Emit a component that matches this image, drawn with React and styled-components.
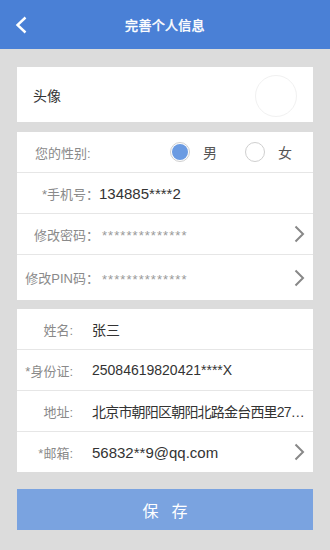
import React from "react";
import styled, { createGlobalStyle } from "styled-components";

const Global = createGlobalStyle`
  html, body { margin: 0; padding: 0; }
  body {
    background: #dcdcdc;
    font-family: "Liberation Sans", "Noto Sans CJK SC", sans-serif;
    width: 330px;
    height: 550px;
    overflow: hidden;
  }
`;

const Page = styled.div`
  width: 330px;
  height: 550px;
  background: #dcdcdc;
  display: flex;
  flex-direction: column;
`;

const Header = styled.header`
  height: 49px;
  background: #4a80d6;
  display: grid;
  grid-template-columns: 49px 1fr 49px;
  align-items: center;
  flex-shrink: 0;
`;

const BackButton = styled.div`
  display: flex;
  align-items: center;
  padding-left: 15px;
  height: 49px;
`;

const Title = styled.h1`
  margin: 0;
  text-align: center;
  color: #fff;
  font-size: 13px;
  font-weight: 400;
  letter-spacing: 0.3px;
  -webkit-text-stroke: 0.45px #fff;
`;

const Body = styled.main`
  padding: 18px 17px 0;
  display: flex;
  flex-direction: column;
`;

const Card = styled.section`
  background: #fff;
  margin-bottom: ${(p) => p.$mb || 0}px;
  display: flex;
  flex-direction: column;
`;

const AvatarRow = styled.div`
  height: 55px;
  display: flex;
  align-items: center;
  justify-content: space-between;
  padding: 0 16px 0 16px;
  font-size: 14px;
  color: #333;
`;

const AvatarCircle = styled.div`
  width: 40px;
  height: 40px;
  border-radius: 50%;
  border: 1px solid #f1f1f1;
  margin-top: 2px;
`;

const Row = styled.div`
  height: ${(p) => p.$h || 40}px;
  display: flex;
  align-items: center;
  border-bottom: ${(p) => (p.$last ? "none" : "1px solid #e6e6e6")};
  padding-right: ${(p) => p.$pr ?? 8}px;
`;

const Label = styled.span`
  flex: 0 0 ${(p) => p.$w}px;
  text-align: right;
  font-size: 13px;
  color: #8a8a8a;
  white-space: nowrap;
`;

const GenderLabel = styled.span`
  padding-left: 18px;
  font-size: 13px;
  color: #8a8a8a;
  flex: 1;
`;

const Value = styled.span`
  flex: 1;
  min-width: 0;
  margin-left: ${(p) => p.$ml || 0}px;
  font-size: ${(p) => p.$fs || 14}px;
  letter-spacing: ${(p) => p.$ls || 0}px;
  color: #333;
  white-space: nowrap;
`;

const Stars = styled.span`
  flex: 1;
  margin-left: 3px;
  font-size: 13px;
  letter-spacing: 1.05px;
  color: #9a9a9a;
  padding-top: 3px;
`;

const RadioGroup = styled.div`
  display: flex;
  align-items: center;
`;

const RadioItem = styled.label`
  display: flex;
  align-items: center;
  gap: 13px;
  margin-left: ${(p) => p.$ml || 0}px;
  font-size: 14px;
  color: #555;
`;

const RadioDot = styled.span`
  width: 20px;
  height: 20px;
  border-radius: 50%;
  border: 1px solid #cfcfcf;
  display: flex;
  align-items: center;
  justify-content: center;
  box-sizing: border-box;
  &::after {
    content: "";
    width: 16px;
    height: 16px;
    border-radius: 50%;
    background: ${(p) => (p.$checked ? "#6b9be2" : "transparent")};
  }
`;

const SaveButton = styled.button`
  margin-top: 17px;
  height: 41px;
  width: 100%;
  border: none;
  background: #7aa3e0;
  color: #fff;
  font-family: inherit;
  font-size: 16px;
  letter-spacing: 13px;
  padding: 0 0 0 13px;
`;

const Chevron = () => (
  <svg width="11" height="18" viewBox="0 0 11 18">
    <path d="M1.5 1.5 L9 9 L1.5 16.5" fill="none" stroke="#888" strokeWidth="2" />
  </svg>
);

export default function App() {
  return (
    <>
      <Global />
      <Page>
        <Header>
          <BackButton>
            <svg width="13" height="18" viewBox="0 0 13 18">
              <path d="M10.5 1.5 L2.5 9 L10.5 16.5" fill="none" stroke="#fff" strokeWidth="2.4" />
            </svg>
          </BackButton>
          <Title>完善个人信息</Title>
          <div />
        </Header>
        <Body>
          <Card $mb={10}>
            <AvatarRow>
              <span>头像</span>
              <AvatarCircle />
            </AvatarRow>
          </Card>
          <Card $mb={9}>
            <Row $pr={21}>
              <GenderLabel>您的性别:</GenderLabel>
              <RadioGroup>
                <RadioItem>
                  <RadioDot $checked />男
                </RadioItem>
                <RadioItem $ml={28}>
                  <RadioDot />女
                </RadioItem>
              </RadioGroup>
            </Row>
            <Row>
              <Label $w={82}>*手机号：</Label>
              <Value $fs={15}>134885****2</Value>
            </Row>
            <Row>
              <Label $w={82}>修改密码：</Label>
              <Stars>**************</Stars>
              <Chevron />
            </Row>
            <Row $h={45} $last>
              <Label $w={82}>修改PIN码：</Label>
              <Stars>**************</Stars>
              <Chevron />
            </Row>
          </Card>
          <Card>
            <Row>
              <Label $w={56}>姓名:</Label>
              <Value $ml={19}>张三</Value>
            </Row>
            <Row>
              <Label $w={56}>*身份证:</Label>
              <Value $ml={19}>25084619820421****X</Value>
            </Row>
            <Row $pr={6}>
              <Label $w={56}>地址:</Label>
              <Value $ml={19} $ls={-0.8}>北京市朝阳区朝阳北路金台西里27…</Value>
            </Row>
            <Row $last>
              <Label $w={56}>*邮箱:</Label>
              <Value $ml={19} $fs={15}>56832**9@qq.com</Value>
              <Chevron />
            </Row>
          </Card>
          <SaveButton>保存</SaveButton>
        </Body>
      </Page>
    </>
  );
}
